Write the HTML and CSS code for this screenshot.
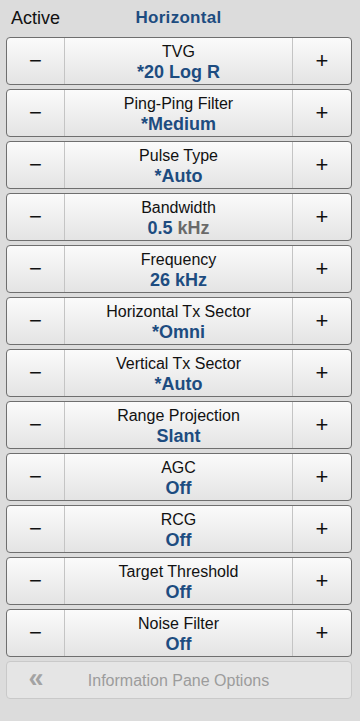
FILE: index.html
```html
<!DOCTYPE html>
<html lang="en">
<head>
    <meta charset="UTF-8">
    <meta name="viewport" content="width=device-width, initial-scale=1.0">
    <title>Sonar Settings</title>
    <link rel="stylesheet" href="styles.css">
</head>
<body>

    <div class="header">
        <span class="active">Active</span>
        <span class="mode">Horizontal</span>
    </div>

    <div class="panel">
        <div class="setting">
            <button class="step">&minus;</button>
            <div class="info"><span class="label">TVG</span><span class="value">*20 Log R</span></div>
            <button class="step">+</button>
        </div>
        <div class="setting">
            <button class="step">&minus;</button>
            <div class="info"><span class="label">Ping-Ping Filter</span><span class="value">*Medium</span></div>
            <button class="step">+</button>
        </div>
        <div class="setting">
            <button class="step">&minus;</button>
            <div class="info"><span class="label">Pulse Type</span><span class="value">*Auto</span></div>
            <button class="step">+</button>
        </div>
        <div class="setting">
            <button class="step">&minus;</button>
            <div class="info"><span class="label">Bandwidth</span><span class="value">0.5 <span class="unit">kHz</span></span></div>
            <button class="step">+</button>
        </div>
        <div class="setting">
            <button class="step">&minus;</button>
            <div class="info"><span class="label">Frequency</span><span class="value">26 kHz</span></div>
            <button class="step">+</button>
        </div>
        <div class="setting">
            <button class="step">&minus;</button>
            <div class="info"><span class="label">Horizontal Tx Sector</span><span class="value">*Omni</span></div>
            <button class="step">+</button>
        </div>
        <div class="setting">
            <button class="step">&minus;</button>
            <div class="info"><span class="label">Vertical Tx Sector</span><span class="value">*Auto</span></div>
            <button class="step">+</button>
        </div>
        <div class="setting">
            <button class="step">&minus;</button>
            <div class="info"><span class="label">Range Projection</span><span class="value">Slant</span></div>
            <button class="step">+</button>
        </div>
        <div class="setting">
            <button class="step">&minus;</button>
            <div class="info"><span class="label">AGC</span><span class="value">Off</span></div>
            <button class="step">+</button>
        </div>
        <div class="setting">
            <button class="step">&minus;</button>
            <div class="info"><span class="label">RCG</span><span class="value">Off</span></div>
            <button class="step">+</button>
        </div>
        <div class="setting">
            <button class="step">&minus;</button>
            <div class="info"><span class="label">Target Threshold</span><span class="value">Off</span></div>
            <button class="step">+</button>
        </div>
        <div class="setting">
            <button class="step">&minus;</button>
            <div class="info"><span class="label">Noise Filter</span><span class="value">Off</span></div>
            <button class="step">+</button>
        </div>

        <!-- disabled options row -->
        <div class="options">
            <span class="back">&laquo;</span>
            <span class="options-text">Information Pane Options</span>
        </div>
    </div>

</body>
</html>
```

FILE: styles.css
```css
body {
    font-family: "Liberation Sans", Arial, sans-serif;
    margin: 0;
    background-color: #dcdcdc;
    width: 360px;
    height: 721px;
    overflow: hidden;
}

.header {
    display: grid;
    grid-template-columns: 58px 1fr 59px;
    height: 37px;
    padding: 0 8px 0 6px;
    align-items: center;
}

.active {
    font-size: 18px;
    color: #111;
    padding-left: 5px;
    margin-top: -1px;
    white-space: nowrap;
}

.mode {
    text-align: center;
    font-size: 17px;
    font-weight: bold;
    color: #1d4c80;
    letter-spacing: 0.3px;
    margin-top: -1px;
}

.panel {
    display: flex;
    flex-direction: column;
    gap: 4px;
    padding: 0 8px 0 6px;
}

.setting {
    display: grid;
    grid-template-columns: 58px 1fr 59px;
    height: 48px;
    box-sizing: border-box;
    border: 1px solid #6f6f6f;
    border-radius: 4px;
    background: linear-gradient(#fbfbfb, #e4e4e4);
    overflow: hidden;
}

.step {
    font-family: "Liberation Sans", Arial, sans-serif;
    font-size: 22px;
    color: #111;
    background: none;
    border: none;
    padding: 0;
    margin: 0;
    line-height: 1;
}

.setting .step:first-child {
    border-right: 1px solid #c4c4c4;
}

.setting .step:last-child {
    border-left: 1px solid #c4c4c4;
}

.info {
    display: flex;
    flex-direction: column;
    align-items: center;
    padding-top: 5px;
    white-space: nowrap;
}

.label {
    font-size: 16px;
    color: #111;
    line-height: 18px;
}

.value {
    font-size: 18px;
    font-weight: bold;
    color: #1d4c80;
    line-height: 22px;
}

.unit {
    color: #6a6a6a;
}

.options {
    display: grid;
    grid-template-columns: 58px 1fr 59px;
    height: 38px;
    box-sizing: border-box;
    border: 1px solid #c9c9c9;
    border-radius: 4px;
    background-color: #e5e5e5;
    align-items: center;
}

.back {
    text-align: center;
    font-size: 27px;
    font-weight: bold;
    color: #a3a3a3;
    margin-top: -4px;
}

.options-text {
    text-align: center;
    font-size: 16px;
    color: #9c9c9c;
    margin-top: 1px;
}
```
